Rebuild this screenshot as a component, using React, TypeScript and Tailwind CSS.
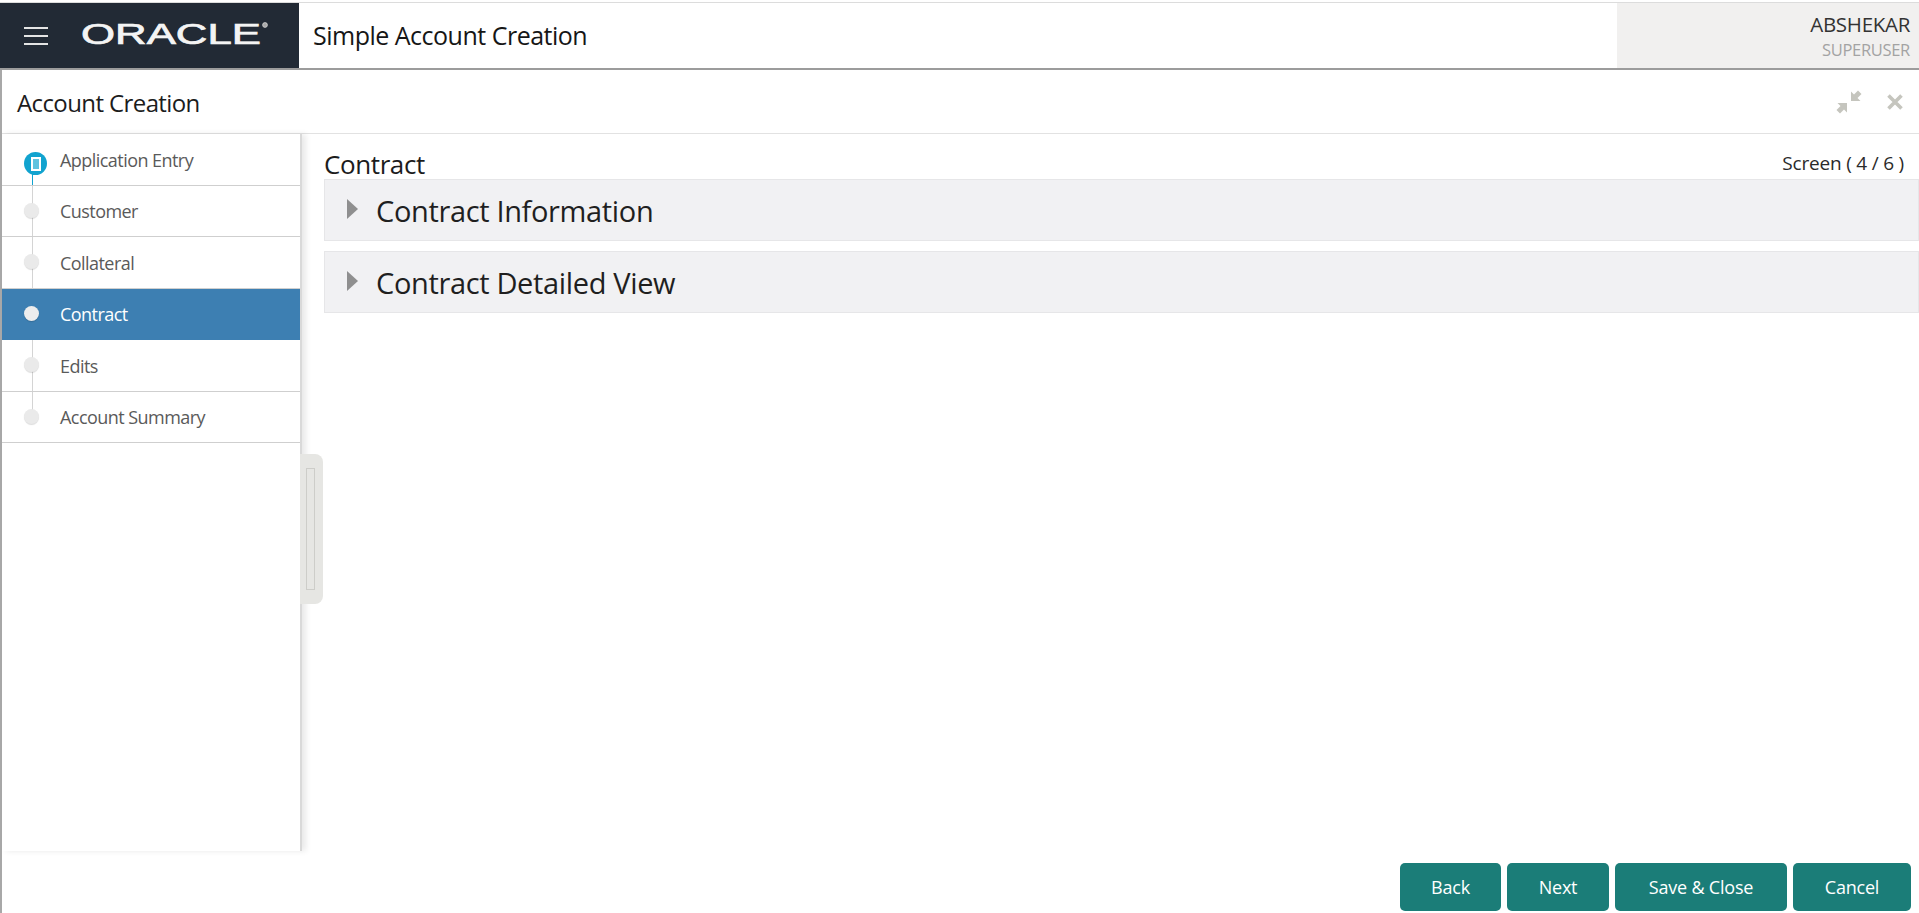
const FONT = "font-['Open_Sans','Noto_Sans',sans-serif]";

const steps = ["Application Entry", "Customer", "Collateral", "Contract", "Edits", "Account Summary"];

function OracleLogo() {
  return (
    <svg width="190" height="44" viewBox="0 0 190 44" className="shrink-0">
      <text
        x="0"
        y="32"
        fill="#f4f4f4"
        stroke="#f4f4f4"
        strokeWidth="0.7"
        fontFamily="'Liberation Sans', sans-serif"
        fontWeight="400"
        fontSize="29"
        textLength="180"
        lengthAdjust="spacingAndGlyphs"
      >
        ORACLE
      </text>
      <circle cx="184" cy="13" r="2.4" fill="#a8a8a8" stroke="#d4d4d4" strokeWidth="0.8" />
    </svg>
  );
}

function CollapseIcon() {
  return (
    <svg width="26" height="26" viewBox="0 0 26 26" fill="#c5c5be">
      <path d="M25.5 5 22 1.5 18 5.5 15 2.5V12h9.5l-3-3z" />
      <path d="M.5 21 4 24.5l4-4 3 3V14H1.5l3 3z" />
    </svg>
  );
}

function CloseIcon() {
  return (
    <svg width="16" height="16" viewBox="0 0 16 16" fill="none" stroke="#c5c5be" strokeWidth="3.6">
      <path d="M1.5 1.5 14.5 14.5M14.5 1.5 1.5 14.5" />
    </svg>
  );
}

function Section({ title, className }: { title: string; className: string }) {
  return (
    <div className={`flex items-center border border-[#e6e6e8] bg-[#f1f1f3] pl-[22px] ${className}`}>
      <span className="mb-[3px] h-0 w-0 border-y-[10px] border-l-[11px] border-y-transparent border-l-[#8f8f8f]" />
      <span className="ml-[18px] text-[29px] leading-none tracking-[-0.35px] text-[#1f1f1f]">{title}</span>
    </div>
  );
}

function FooterButton({ label, className }: { label: string; className: string }) {
  return (
    <button
      type="button"
      className={`h-[48px] rounded-[5px] bg-[#1b7d78] text-[18px] tracking-[-0.2px] text-white ${className}`}
    >
      {label}
    </button>
  );
}

export default function App() {
  return (
    <div className={`flex h-[913px] flex-col overflow-hidden bg-white ${FONT}`}>
      <header className="mt-[2px] flex h-[68px] shrink-0 items-stretch border-t border-b-2 border-t-[#dcdcdc] border-b-[#9c9c9c]">
        <div className="flex w-[299px] shrink-0 items-center bg-[#222a35] pl-[24px]">
          <div className="flex w-[24px] flex-col gap-[6px]">
            <span className="h-[2px] bg-[#e4e4e4]" />
            <span className="h-[2px] bg-[#e4e4e4]" />
            <span className="h-[2px] bg-[#e4e4e4]" />
          </div>
          <div className="ml-[33px] mt-[-3px]">
            <OracleLogo />
          </div>
        </div>
        <div className="flex flex-1 items-center pl-[14px] text-[25px] tracking-[-0.5px] text-[#161616]">
          Simple Account Creation
        </div>
        <div className="flex w-[302px] flex-col items-end bg-[#f1f0ef] pr-[9px] pt-[8px]">
          <span className="text-[20.5px] leading-[26px] tracking-[-0.3px] text-[#333333]">ABSHEKAR</span>
          <span className="text-[16.5px] leading-[26px] tracking-[-0.3px] text-[#a3a3a3]">SUPERUSER</span>
        </div>
      </header>

      <div className="flex min-h-0 flex-1 flex-col border-l-2 border-l-[#a8a8a8]">
        <div className="flex h-[64px] shrink-0 items-center justify-between border-b border-b-[#e2e2e2] pl-[15px] pr-[16px]">
          <h1 className="mt-[2px] text-[24px] tracking-[-0.6px] text-[#1c1c1c]">Account Creation</h1>
          <div className="flex items-center gap-[25px]">
            <CollapseIcon />
            <CloseIcon />
          </div>
        </div>

        <div className="relative flex min-h-0 flex-1">
          <nav className="relative w-[300px] shrink-0 border-r-2 border-r-[#d9d9d9] shadow-[4px_0_6px_rgba(0,0,0,0.09)]">
            <span className="absolute left-[30px] top-[29px] h-[253px] w-px bg-[#d4d4d4]" />
            <span className="absolute left-[30px] top-[37px] h-[14px] w-px bg-[#11a3cf]" />
            {steps.map((step, i) => {
              const active = step === "Contract";
              return (
                <div
                  key={step}
                  className={`relative flex h-[51.5px] items-center border-b pl-[58px] text-[18px] tracking-[-0.55px] ${
                    active ? "border-b-[#3d7fb2] bg-[#3d7fb2] text-white" : "border-b-[#cfcfcf] text-[#5a5a5a]"
                  }`}
                >
                  {i === 0 ? (
                    <span className="absolute left-[22px] top-[18px] flex h-[23px] w-[23px] items-center justify-center rounded-full bg-[#11a3cf]">
                      <span className="h-[14px] w-[10px] border-2 border-white bg-[#5fc3df]" />
                    </span>
                  ) : (
                    <span
                      className={`absolute left-[22px] top-[17px] h-[15px] w-[15px] rounded-full shadow-[0_1px_1px_rgba(0,0,0,0.14)] ${
                        active ? "bg-[#ededed]" : "bg-[#eaeaea]"
                      }`}
                    />
                  )}
                  <span className="mt-[2px]">{step}</span>
                </div>
              );
            })}
          </nav>

          {/* drag handle sits over the sidebar edge */}
          <div className="absolute left-[298px] top-[320px] flex h-[150px] w-[23px] items-center rounded-r-[8px] bg-[#e6e6e3] pl-[6px]">
            <div className="h-[122px] w-[9px] border border-[#cdcdc9]" />
          </div>

          <main className="min-w-0 flex-1 pl-[22px]">
            <div className="flex h-[45px] items-end justify-between pr-[15px]">
              <h2 className="mb-[-2px] text-[26px] leading-[33px] tracking-[-0.4px] text-[#1c1c1c]">Contract</h2>
              <span className="mb-[3px] text-[19px] leading-[26px] tracking-[-0.2px] text-[#2a2a2a]">Screen ( 4 / 6 )</span>
            </div>
            <Section title="Contract Information" className="h-[62px]" />
            <Section title="Contract Detailed View" className="mt-[10px] h-[62px]" />
          </main>
        </div>

        <footer className="flex h-[62px] shrink-0 items-start justify-end gap-[6px] pr-[8px] pt-[12px]">
          <FooterButton label="Back" className="w-[101px]" />
          <FooterButton label="Next" className="w-[102px]" />
          <FooterButton label="Save & Close" className="w-[172px]" />
          <FooterButton label="Cancel" className="w-[118px]" />
        </footer>
      </div>
    </div>
  );
}
